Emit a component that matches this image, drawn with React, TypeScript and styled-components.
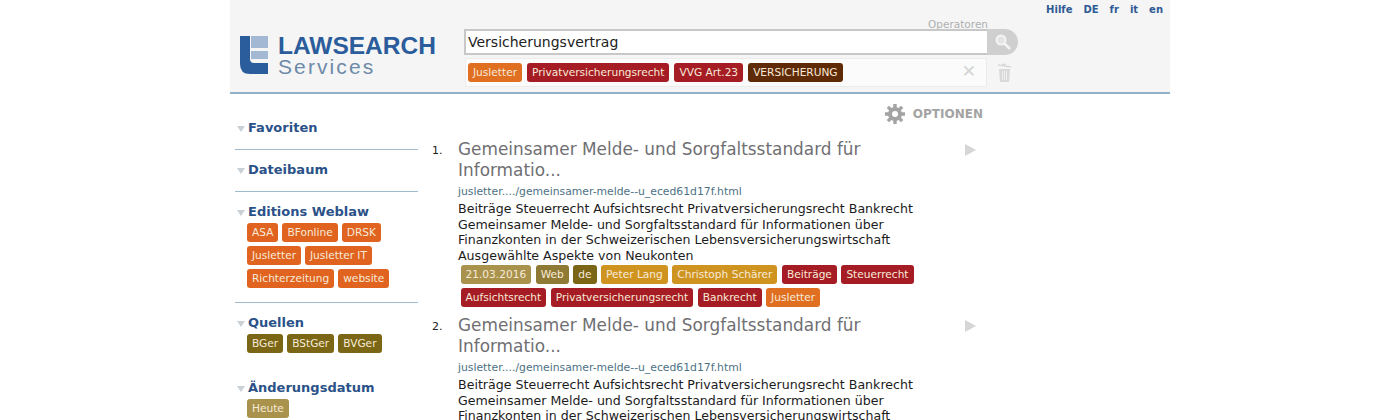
import React from 'react';
import styled, { createGlobalStyle } from 'styled-components';

const GlobalStyle = createGlobalStyle`
  html, body {
    margin: 0;
    padding: 0;
    height: 420px;
    overflow: hidden;
    background: #fff;
    font-family: "DejaVu Sans", Verdana, sans-serif;
  }
`;

const colors = {
  orange: '#e0631f',
  red: '#a61c24',
  brown: '#5f2a06',
  olive: '#7a6614',
  khaki: '#a8924c',
  tan: '#8f7a35',
  gold: '#cf9420',
  amber: '#e06f22',
};

// Header
const Page = styled.div`
  width: 940px;
  height: 420px;
  overflow: hidden;
  margin: 0 auto;
`;

const Header = styled.header`
  height: 92px;
  background: #f5f5f5;
  border-bottom: 2px solid #90b2c9;
  display: flex;
  flex-direction: column;
`;

const TopLinks = styled.nav`
  display: flex;
  justify-content: flex-end;
  gap: 11px;
  height: 18px;
  padding: 3px 7px 0 0;
  box-sizing: border-box;
  font-size: 10px;
  font-weight: bold;
  line-height: 13px;
  color: #2f5a94;
`;

const HeaderRow = styled.div`
  display: flex;
  padding-left: 10px;
`;

const Logo = styled.div`
  width: 224px;
  height: 42px;
  margin-top: 18px;
  display: flex;
  gap: 10px;
`;

const LogoText = styled.div`
  display: flex;
  flex-direction: column;
  margin-top: -1px;
  font-family: "Liberation Sans", Arial, sans-serif;
`;

const LogoTitle = styled.span`
  font-size: 24.5px;
  font-weight: bold;
  line-height: 22px;
  color: #2b5c9b;
`;

const LogoSub = styled.span`
  font-size: 21px;
  line-height: 19px;
  letter-spacing: 2.1px;
  color: #6d8aa8;
`;

const SearchColumn = styled.div`
  display: flex;
  flex-direction: column;
  width: 560px;
`;

const Operators = styled.div`
  width: 524px;
  height: 11px;
  text-align: right;
  font-size: 10.5px;
  line-height: 13px;
  color: #b0b0b0;
`;

const SearchRow = styled.div`
  display: flex;
  height: 26px;
`;

const SearchInput = styled.div`
  width: 523px;
  box-sizing: border-box;
  background: #fff;
  border: 2px solid #c8c8c8;
  border-right: none;
  padding-left: 2px;
  font-size: 14px;
  line-height: 22px;
  color: #222;
`;

const SearchButton = styled.div`
  width: 31px;
  background: #cfcfcf;
  border-radius: 0 13px 13px 0;
  display: flex;
  align-items: center;
  justify-content: center;
`;

const FilterRow = styled.div`
  display: flex;
  align-items: center;
  margin-top: 3px;
`;

const FilterBox = styled.div`
  width: 522px;
  height: 29px;
  box-sizing: border-box;
  margin-left: 1px;
  background: #fbfbfb;
  border: 1px solid #ececec;
  padding: 4px 0 0 2px;
  display: flex;
  gap: 5px;
  position: relative;
`;

const ClearMark = styled.span`
  position: absolute;
  right: 10px;
  top: 2px;
  font-size: 17px;
  line-height: 20px;
  font-weight: bold;
  color: #d4d4d4;
`;

const TrashWrap = styled.div`
  margin-left: 10px;
  display: flex;
`;

const Tag = styled.span<{ $bg: string }>`
  display: inline-block;
  height: 19px;
  padding: 0 5px;
  border-radius: 3px;
  background: ${({ $bg }) => $bg};
  color: #f7ead8;
  font-size: 10.6px;
  line-height: 19px;
  white-space: nowrap;
`;

// Content
const Content = styled.div`
  display: flex;
`;

const Sidebar = styled.aside`
  width: 188px;
  margin-left: 5px;
  flex-shrink: 0;
`;

const Section = styled.section<{ $last?: boolean; $height: number; $top: number }>`
  height: ${({ $height }) => $height}px;
  padding-top: ${({ $top }) => $top}px;
  box-sizing: border-box;
  border-bottom: ${({ $last }) => ($last ? 'none' : '1px solid #9fbacd')};
  width: 183px;
`;

const SectionTitle = styled.h3`
  margin: 0;
  display: flex;
  align-items: center;
  gap: 3px;
  font-size: 13px;
  line-height: 16px;
  font-weight: bold;
  color: #2b5288;
`;

const Triangle = styled.span`
  width: 0;
  height: 0;
  margin: 2px 0 0 2px;
  border-left: 4px solid transparent;
  border-right: 4px solid transparent;
  border-top: 6px solid #c9d0d6;
`;

const SideTags = styled.div`
  display: flex;
  flex-wrap: wrap;
  gap: 4px;
  margin: 3px 0 0 12px;
  width: 160px;
`;

const Main = styled.main`
  width: 551px;
  margin-left: 9px;
`;

const Options = styled.div`
  height: 39px;
  padding-top: 10px;
  box-sizing: border-box;
  display: flex;
  justify-content: flex-end;
  align-items: flex-start;
  gap: 8px;
`;

const OptionsLabel = styled.span`
  font-size: 12px;
  font-weight: bold;
  line-height: 20px;
  color: #a3a3a3;
`;

const Result = styled.article`
  display: flex;
  height: 176px;
  width: 551px;
`;

const ResultNumber = styled.span`
  width: 26px;
  flex-shrink: 0;
  padding-top: 10px;
  font-size: 11px;
  line-height: 16px;
  color: #222;
`;

const ResultBody = styled.div`
  width: 466px;
  flex-shrink: 0;
  padding-top: 6px;
`;

const ResultTitle = styled.div`
  font-size: 16.9px;
  line-height: 21px;
  color: #6f6f73;
`;

const ResultUrl = styled.div`
  margin-top: 4px;
  font-size: 10.8px;
  line-height: 14px;
  color: #4d7183;
`;

const ResultText = styled.p`
  margin: 2px 0 0;
  font-size: 12.6px;
  line-height: 15.6px;
  color: #1c1c1c;
`;

const ResultTags = styled.div`
  display: flex;
  flex-wrap: wrap;
  gap: 4px 4.5px;
  margin: 2px 0 0 2.5px;
`;

const Arrow = styled.span`
  width: 0;
  height: 0;
  margin: 11px 0 0 41px;
  border-top: 6px solid transparent;
  border-bottom: 6px solid transparent;
  border-left: 11px solid #d6d6d6;
`;

const LogoMark = () => (
  <svg width="28" height="38" viewBox="0 0 28 38">
    <path d="M0 0h10v23q0 4 4 4h14v11H10Q0 38 0 28z" fill="#2b5c9b" />
    <rect x="11" y="0" width="17" height="12" fill="#a3b8d3" />
    <rect x="11" y="15" width="17" height="8" fill="#a3b8d3" />
  </svg>
);

const SearchIcon = () => (
  <svg width="16" height="16" viewBox="0 0 16 16">
    <circle cx="6" cy="6" r="4.5" fill="#e4e4e4" stroke="#f4f4f4" strokeWidth="2" />
    <path d="M9.5 9.5L15 15" stroke="#f4f4f4" strokeWidth="2.5" />
  </svg>
);

const TrashIcon = () => (
  <svg width="15" height="19" viewBox="0 0 15 19">
    <path d="M1 2L14 4" stroke="#d9d9d9" strokeWidth="1.5" />
    <path d="M5 1.5h4" stroke="#d9d9d9" strokeWidth="1.5" />
    <path d="M2 6h11l-1 13H3z" fill="#d9d9d9" />
    <path d="M5.5 8v9M7.5 8v9M9.5 8v9" stroke="#f5f5f5" strokeWidth="0.8" />
  </svg>
);

const GearIcon = () => (
  <svg width="20" height="20" viewBox="0 0 20 20">
    <g stroke="#a3a3a3" strokeWidth="3.4">
      <path d="M10 0v20M0 10h20M2.9 2.9l14.2 14.2M17.1 2.9L2.9 17.1" />
    </g>
    <circle cx="10" cy="10" r="7" fill="#a3a3a3" />
    <circle cx="10" cy="10" r="3" fill="#fff" />
  </svg>
);

const filters = [
  { label: 'Jusletter', bg: colors.amber },
  { label: 'Privatversicherungsrecht', bg: colors.red },
  { label: 'VVG Art.23', bg: colors.red },
  { label: 'VERSICHERUNG', bg: colors.brown },
];

const resultTags = [
  { label: '21.03.2016', bg: colors.khaki },
  { label: 'Web', bg: colors.tan },
  { label: 'de', bg: colors.olive },
  { label: 'Peter Lang', bg: colors.gold },
  { label: 'Christoph Schärer', bg: colors.gold },
  { label: 'Beiträge', bg: colors.red },
  { label: 'Steuerrecht', bg: colors.red },
  { label: 'Aufsichtsrecht', bg: colors.red },
  { label: 'Privatversicherungsrecht', bg: colors.red },
  { label: 'Bankrecht', bg: colors.red },
  { label: 'Jusletter', bg: colors.amber },
];

const results = [
  { id: 1, url: 'jusletter..../gemeinsamer-melde--u_eced61d17f.html' },
  { id: 2, url: 'jusletter..../gemeinsamer-melde--u_eced61d17f.html' },
];

const App = () => (
  <Page>
    <GlobalStyle />
    <Header>
      <TopLinks>
        <span>Hilfe</span>
        <span>DE</span>
        <span>fr</span>
        <span>it</span>
        <span>en</span>
      </TopLinks>
      <HeaderRow>
        <Logo>
          <LogoMark />
          <LogoText>
            <LogoTitle>LAWSEARCH</LogoTitle>
            <LogoSub>Services</LogoSub>
          </LogoText>
        </Logo>
        <SearchColumn>
          <Operators>Operatoren</Operators>
          <SearchRow>
            <SearchInput>Versicherungsvertrag</SearchInput>
            <SearchButton>
              <SearchIcon />
            </SearchButton>
          </SearchRow>
          <FilterRow>
            <FilterBox>
              {filters.map((f) => (
                <Tag key={f.label} $bg={f.bg}>
                  {f.label}
                </Tag>
              ))}
              <ClearMark>✕</ClearMark>
            </FilterBox>
            <TrashWrap>
              <TrashIcon />
            </TrashWrap>
          </FilterRow>
        </SearchColumn>
      </HeaderRow>
    </Header>
    <Content>
      <Sidebar>
        <Section $height={56} $top={26}>
          <SectionTitle>
            <Triangle />
            Favoriten
          </SectionTitle>
        </Section>
        <Section $height={42} $top={12}>
          <SectionTitle>
            <Triangle />
            Dateibaum
          </SectionTitle>
        </Section>
        <Section $height={111} $top={12}>
          <SectionTitle>
            <Triangle />
            Editions Weblaw
          </SectionTitle>
          <SideTags>
            {['ASA', 'BFonline', 'DRSK', 'Jusletter', 'Jusletter IT', 'Richterzeitung', 'website'].map((t) => (
              <Tag key={t} $bg={colors.orange}>
                {t}
              </Tag>
            ))}
          </SideTags>
        </Section>
        <Section $last $height={77} $top={12}>
          <SectionTitle>
            <Triangle />
            Quellen
          </SectionTitle>
          <SideTags>
            {['BGer', 'BStGer', 'BVGer'].map((t) => (
              <Tag key={t} $bg={colors.olive}>
                {t}
              </Tag>
            ))}
          </SideTags>
        </Section>
        <Section $last $height={42} $top={0}>
          <SectionTitle>
            <Triangle />
            Änderungsdatum
          </SectionTitle>
          <SideTags>
            <Tag $bg={colors.khaki}>Heute</Tag>
          </SideTags>
        </Section>
      </Sidebar>
      <Main>
        <Options>
          <GearIcon />
          <OptionsLabel>OPTIONEN</OptionsLabel>
        </Options>
        {results.map((r) => (
          <Result key={r.id}>
            <ResultNumber>{r.id}.</ResultNumber>
            <ResultBody>
              <ResultTitle>
                Gemeinsamer Melde- und Sorgfaltsstandard für
                <br />
                Informatio...
              </ResultTitle>
              <ResultUrl>{r.url}</ResultUrl>
              <ResultText>
                Beiträge Steuerrecht Aufsichtsrecht Privatversicherungsrecht Bankrecht
                <br />
                Gemeinsamer Melde- und Sorgfaltsstandard für Informationen über
                <br />
                Finanzkonten in der Schweizerischen Lebensversicherungswirtschaft
                <br />
                Ausgewählte Aspekte von Neukonten
              </ResultText>
              <ResultTags>
                {resultTags.map((t) => (
                  <Tag key={t.label} $bg={t.bg}>
                    {t.label}
                  </Tag>
                ))}
              </ResultTags>
            </ResultBody>
            <Arrow />
          </Result>
        ))}
      </Main>
    </Content>
  </Page>
);

export default App;
